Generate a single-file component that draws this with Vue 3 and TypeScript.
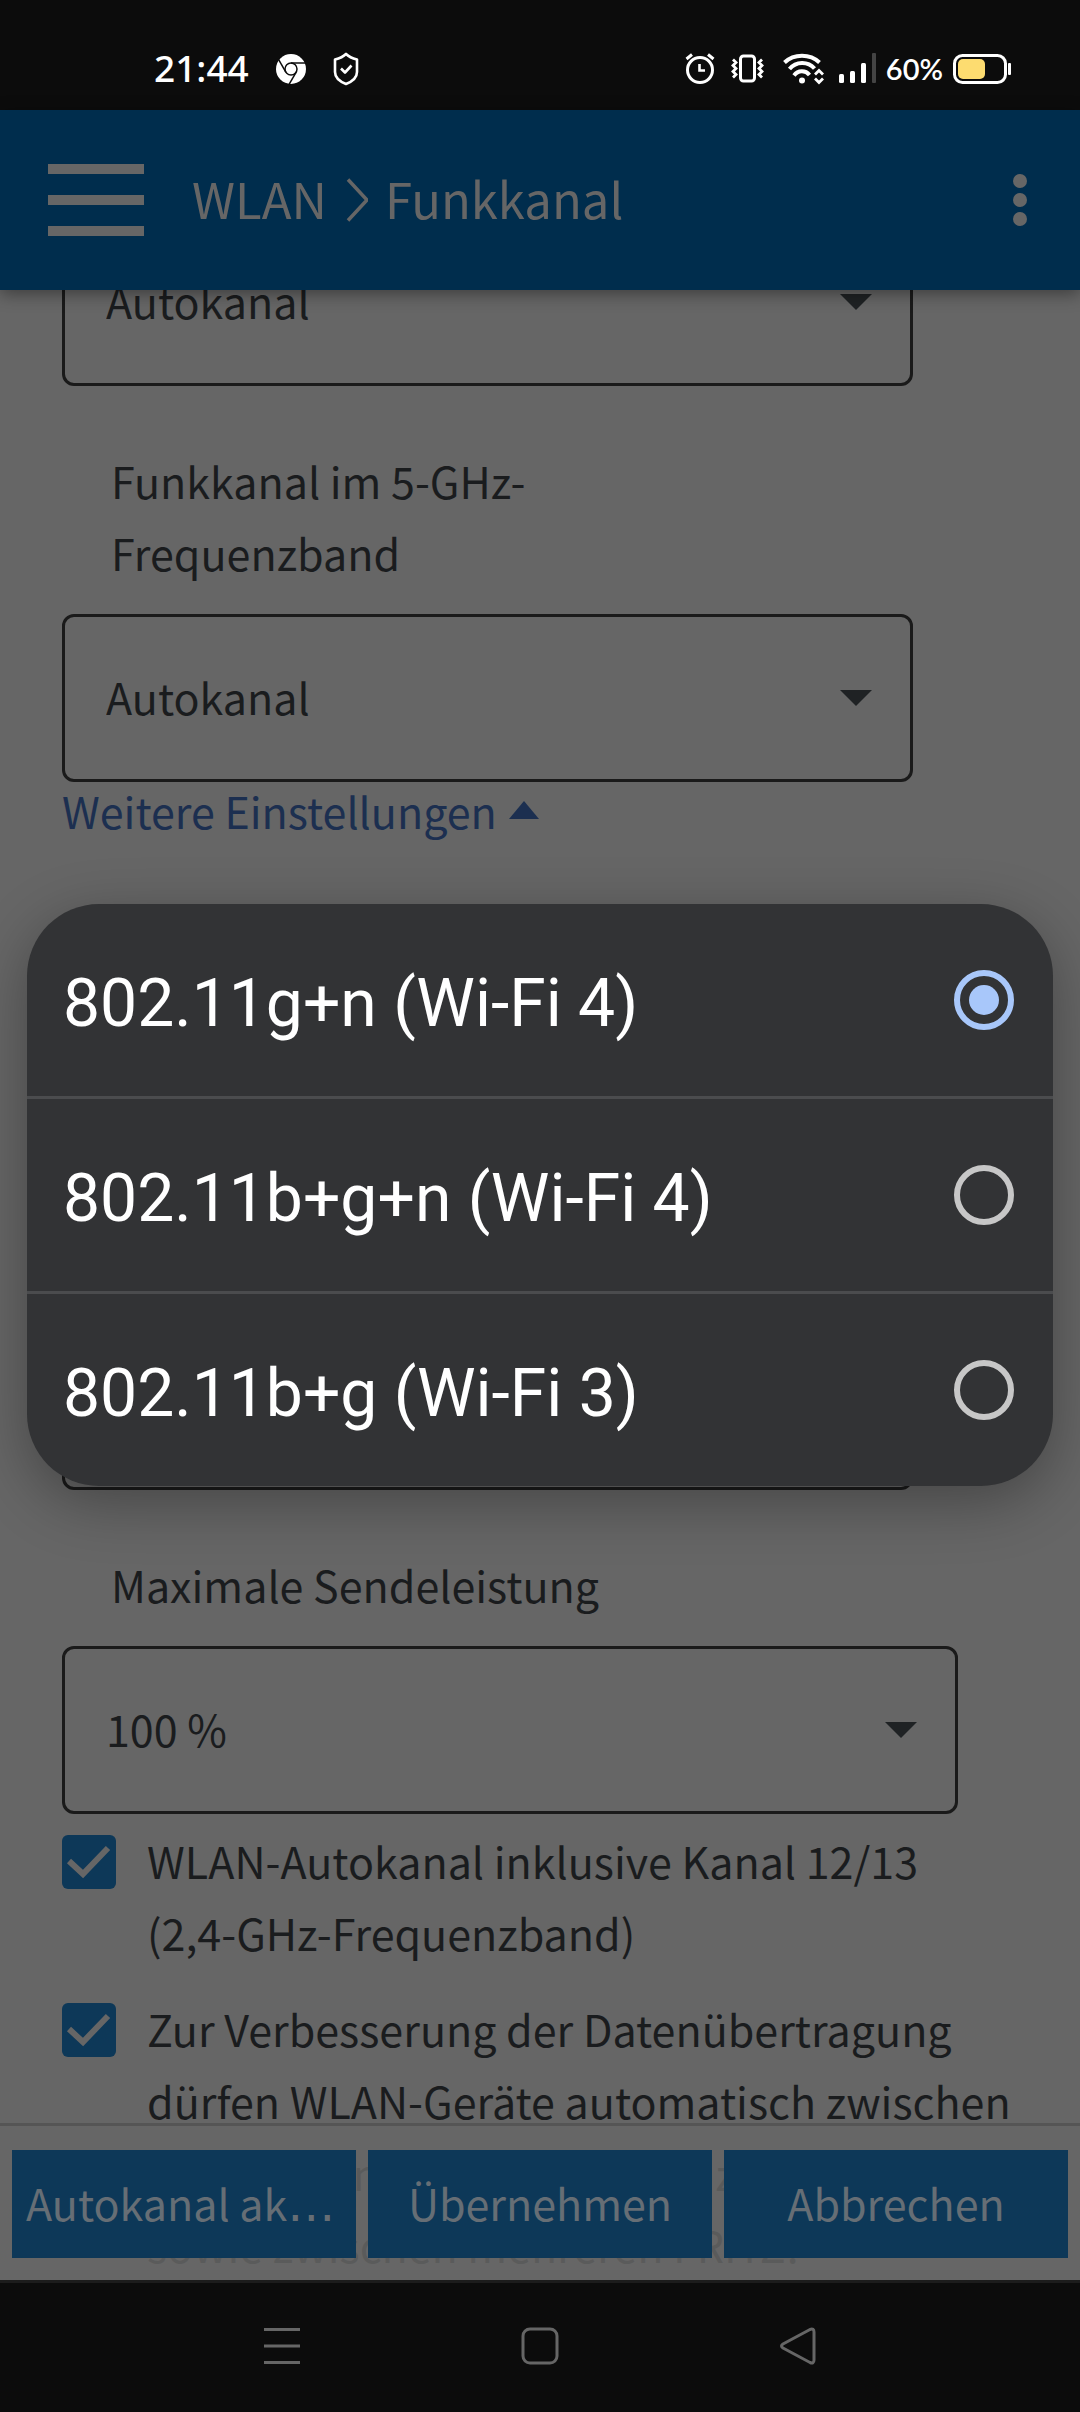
<script setup lang="ts">
import { ref } from 'vue'

const modes: string[] = [
  '802.11g+n (Wi-Fi 4)',
  '802.11b+g+n (Wi-Fi 4)',
  '802.11b+g (Wi-Fi 3)',
]
const mode = ref<string>(modes[0])
const channel24 = ref('Autokanal')
const channel5 = ref('Autokanal')
const power = ref('100 %')
const extendedChannels = ref(true)
const bandSteering = ref(true)
</script>

<template>
  <div class="screen" lang="de">
    <div class="status">
      <div class="status-left">
        <span class="clock">21:44</span>
        <svg width="30" height="32" viewBox="0 0 30 32">
          <circle cx="15" cy="16" r="15" fill="#fff" />
          <g fill="none" stroke="#0c0c0c" stroke-width="1.5">
            <circle cx="15" cy="16" r="6" />
            <path d="M15 10H29" />
            <path d="M15 10H29" transform="rotate(120 15 16)" />
            <path d="M15 10H29" transform="rotate(240 15 16)" />
          </g>
        </svg>
        <svg width="26" height="34" viewBox="0 0 26 34" fill="none" stroke="#fff" stroke-width="2.6" stroke-linejoin="round">
          <path d="M13 2C10 5 6 6.500 2 7.500V20C2 26 8 30 13 32C18 30 24 26 24 20V7.500C20 6.500 16 5 13 2Z" />
          <path d="M8 16.500L12 20.500L18.500 13.500" />
        </svg>
      </div>
      <div class="status-right">
        <svg width="38" height="34" viewBox="0 0 38 34" fill="none" stroke="#fff" stroke-width="3">
          <circle cx="19" cy="18" r="12.500" />
          <path d="M18.500 12V18.500H24" stroke-width="2.600" />
          <path d="M5.500 7L11 2.500M27 2.500L32.500 7" />
        </svg>
        <svg width="38" height="34" viewBox="0 0 38 34" fill="none" stroke="#fff">
          <rect x="11.500" y="4" width="14" height="25" rx="3" stroke-width="3" />
          <path d="M4 7.500L7 10.500L4 13.500L7 16.500L4 19.500L7 22.500L4 25.500M33 7.500L30 10.500L33 13.500L30 16.500L33 19.500L30 22.500L33 25.500" stroke-width="2.800" />
        </svg>
        <svg width="50" height="34" viewBox="0 0 50 34" fill="none" stroke="#fff" stroke-width="4">
          <path d="M7.500 10.500C17 1.500 33 1.500 42.500 10.500" />
          <path d="M12.500 17C19 9 31 9 37.500 16.500" />
          <path d="M17 23.500C21 18 28.500 18 32.500 23" />
          <circle cx="25" cy="28.500" r="3" fill="#fff" stroke="none" />
          <path d="M38 22.500L42 18.500L46 22.500M38 26.500L42 30.500L46 26.500" stroke-width="2.800" />
        </svg>
        <svg width="39" height="34" viewBox="0 0 39 34" fill="#fff">
          <rect x="2" y="22" width="5" height="9" rx="1.500" />
          <rect x="13" y="19" width="5" height="12" rx="1.500" />
          <rect x="24" y="11" width="5" height="20" rx="1.500" />
          <rect x="35" y="1" width="4" height="30" rx="1" fill="#444" />
        </svg>
        <span class="percent">60%</span>
        <svg width="58" height="34" viewBox="0 0 58 34">
          <rect x="1.500" y="3.500" width="51" height="27" rx="8" fill="none" stroke="#fff" stroke-width="3" />
          <rect x="5" y="7" width="27" height="20" rx="5" fill="#fddc70" />
          <rect x="55" y="11" width="3" height="12" rx="1" fill="#fff" />
        </svg>
      </div>
    </div>

    <div class="app">
      <header class="header">
        <button class="menu" type="button" aria-label="Menü">
          <span></span><span></span><span></span>
        </button>
        <h1 class="crumbs">
          <span>WLAN</span>
          <svg width="24" height="44" viewBox="0 0 24 44" fill="none" stroke="#666" stroke-width="3.500">
            <path d="M4 1.500L23 22L4 42.500" />
          </svg>
          <span>Funkkanal</span>
        </h1>
        <button class="more" type="button" aria-label="Mehr">
          <span></span><span></span><span></span>
        </button>
      </header>

      <main class="content">
        <form class="form" @submit.prevent>
          <div class="select first">
            <select v-model="channel24" aria-label="Autokanal">
              <option>Autokanal</option>
            </select>
            <svg class="caret" width="32" height="16" viewBox="0 0 32 16"><path d="M0 0H32L16 16Z" /></svg>
          </div>

          <label class="label" for="channel5">Funkkanal im 5-GHz-Frequenzband</label>
          <div class="select">
            <select id="channel5" v-model="channel5">
              <option>Autokanal</option>
            </select>
            <svg class="caret" width="32" height="16" viewBox="0 0 32 16"><path d="M0 0H32L16 16Z" /></svg>
          </div>

          <a class="link" href="#">
            Weitere Einstellungen
            <svg width="30" height="18" viewBox="0 0 30 18"><path d="M0 18H30L15 0Z" /></svg>
          </a>

          <div class="select mode">
            <select v-model="mode" aria-label="Wi-Fi">
              <option v-for="m in modes" :key="m">{{ m }}</option>
            </select>
            <svg class="caret" width="32" height="16" viewBox="0 0 32 16"><path d="M0 0H32L16 16Z" /></svg>
          </div>

          <label class="label" for="power">Maximale Sendeleistung</label>
          <div class="select wide">
            <select id="power" v-model="power">
              <option>100 %</option>
            </select>
            <svg class="caret" width="32" height="16" viewBox="0 0 32 16"><path d="M0 0H32L16 16Z" /></svg>
          </div>

          <label class="check">
            <span class="box">
              <input v-model="extendedChannels" type="checkbox" />
              <svg v-if="extendedChannels" viewBox="0 0 54 54"><path d="M7 26L21 39L46 13" /></svg>
            </span>
            <span>WLAN-Autokanal inklusive Kanal 12/13 <span class="keep">(2,4-GHz-Frequenzband)</span></span>
          </label>
          <label class="check">
            <span class="box">
              <input v-model="bandSteering" type="checkbox" />
              <svg v-if="bandSteering" viewBox="0 0 54 54"><path d="M7 26L21 39L46 13" /></svg>
            </span>
            <span>Zur Verbesserung der Datenübertragung dürfen WLAN-Geräte automatisch zwischen 2,4-GHz- und 5-GHz-Frequenzband<br />sowie zwischen mehreren FRITZ!</span>
          </label>
        </form>

        <footer class="actions">
          <button type="button">Autokanal ak<span class="dots">…</span></button>
          <button type="button">Übernehmen</button>
          <button type="button">Abbrechen</button>
        </footer>
      </main>

      <div class="overlay">
        <div class="popup" role="dialog" aria-modal="true">
          <label v-for="m in modes" :key="m" class="option">
            <span>{{ m }}</span>
            <input v-model="mode" type="radio" name="mode" :value="m" />
          </label>
        </div>
      </div>
    </div>

    <nav class="nav">
      <button type="button" aria-label="Letzte Apps">
        <svg width="38" height="38" viewBox="0 0 38 38"><path d="M1 2.500H37M1 19H37M1 35.500H37" /></svg>
      </button>
      <button type="button" aria-label="Start">
        <svg width="38" height="38" viewBox="0 0 38 38"><rect x="2" y="2" width="34" height="34" rx="7" /></svg>
      </button>
      <button type="button" aria-label="Zurück">
        <svg width="38" height="38" viewBox="0 0 38 38">
          <path d="M31 2.500L4 17Q1 19 4 21L31 35.500Q35 37 35 33V5Q35 1 31 2.500Z" />
        </svg>
      </button>
    </nav>
  </div>
</template>

<style>
body {
  margin: 0;
  background: #0c0c0c;
}
</style>

<style scoped>
* {
  box-sizing: border-box;
}

.screen {
  display: flex;
  flex-direction: column;
  height: 100vh;
  background: #0c0c0c;
  color: #1a1c1e;
  font-family: "Noto Sans CJK SC", "Noto Sans", sans-serif;
  font-size: 43px;
  line-height: 72px;
}

svg {
  display: block;
  flex: none;
}

button {
  margin: 0;
  padding: 0;
  border: 0;
  background: none;
  font: inherit;
}

/* Status bar */
.status {
  display: flex;
  flex: none;
  align-items: center;
  justify-content: space-between;
  height: 110px;
  padding: 28px 69px 0 154px;
  color: #fff;
  line-height: 40px;
}

.status-left {
  display: flex;
  align-items: center;
  gap: 27px;
}

.clock {
  padding-bottom: 2px;
  font-family: "Noto Sans", sans-serif;
  font-size: 37px;
  font-weight: 500;
}

.status-right {
  display: flex;
  align-items: center;
  gap: 10px;
}

.percent {
  font-family: Lato, sans-serif;
  font-size: 29px;
  font-weight: 600;
}

/* App area */
.app {
  position: relative;
  display: flex;
  flex: 1;
  flex-direction: column;
  min-height: 0;
  background: #666;
}

.header {
  position: relative;
  z-index: 1;
  display: flex;
  flex: none;
  align-items: center;
  height: 180px;
  padding: 0 53px 0 48px;
  background: #002d4d;
  box-shadow: 0 4px 16px rgba(0, 0, 0, 0.4);
}

.menu {
  display: flex;
  flex-direction: column;
  gap: 21px;
  width: 96px;
}

.menu span {
  height: 10px;
  background: #666;
}

.crumbs {
  display: flex;
  flex: 1;
  align-items: center;
  gap: 17px;
  margin: 0 0 0 48px;
  color: #666;
  font-size: 49px;
  font-weight: 400;
}

.crumbs span {
  padding-bottom: 4px;
}

.more {
  display: flex;
  flex-direction: column;
  gap: 5px;
}

.more span {
  width: 14px;
  height: 14px;
  border-radius: 50%;
  background: #666;
}

.content {
  position: relative;
  flex: 1;
  min-height: 0;
  overflow: hidden;
}

.form {
  display: flex;
  flex-direction: column;
  align-items: flex-start;
  padding: 0 62px;
}

.select {
  position: relative;
  width: calc(100% - 105px);
}

.select.wide {
  width: calc(100% - 60px);
}

.select.first {
  margin-top: -72px;
}

.select.mode {
  margin-top: 484px;
}

.select select {
  display: block;
  width: 100%;
  height: 168px;
  padding: 0 90px 4px 41px;
  border: 3px solid #1a1a1a;
  border-radius: 12px;
  appearance: none;
  background: #666;
  color: inherit;
  font: inherit;
}

.caret {
  position: absolute;
  top: 76px;
  right: 41px;
  fill: #1f2224;
  pointer-events: none;
}

.label {
  max-width: 600px;
  margin: 58px 0 26px 49px;
}

.link {
  display: flex;
  align-items: center;
  gap: 12px;
  height: 56px;
  color: #1c2f50;
  text-decoration: none;
}

.link svg {
  fill: #1c2f50;
}

.check {
  display: grid;
  grid-template-columns: 54px 1fr;
  gap: 31px;
  margin-top: 10px;
  margin-bottom: 14px;
}

.keep {
  white-space: nowrap;
}

.box {
  position: relative;
  height: 54px;
  margin-top: 11px;
}

.box input {
  display: block;
  width: 54px;
  height: 54px;
  margin: 0;
  border-radius: 6px;
  appearance: none;
  background: #0d3858;
}

.box svg {
  position: absolute;
  inset: 0;
  fill: none;
  stroke: #666;
  stroke-width: 6;
}

.actions {
  position: absolute;
  right: 0;
  bottom: 0;
  left: 0;
  display: grid;
  grid-template-columns: repeat(3, 1fr);
  gap: 12px;
  padding: 24px 12px 22px;
  border-top: 3px solid #555;
  background: rgba(102, 102, 102, 0.85);
}

.actions button {
  height: 108px;
  padding-bottom: 4px;
  overflow: hidden;
  background: #0d3858;
  color: #666e75;
  white-space: nowrap;
}

.actions button:first-child {
  padding-left: 14px;
  text-align: left;
}

.dots {
  font-family: "DejaVu Sans", sans-serif;
  font-size: 48px;
  line-height: 0;
}

/* Option list */
.overlay {
  position: absolute;
  inset: 0;
  z-index: 2;
  display: grid;
  align-items: center;
  padding: 0 27px;
}

.popup {
  overflow: hidden;
  border-radius: 72px;
  background: #323335;
  box-shadow: 0 16px 60px rgba(0, 0, 0, 0.32);
}

.option {
  display: flex;
  align-items: center;
  justify-content: space-between;
  height: 192px;
  padding: 0 39px 0 36px;
  color: #fff;
  font-family: Roboto, sans-serif;
  font-size: 66px;
}

.option span {
  padding-top: 8px;
}

.option + .option {
  height: 195px;
  border-top: 3px solid #4b4c4e;
}

.option input {
  display: grid;
  place-content: center;
  width: 60px;
  height: 60px;
  margin: 0;
  border: 6px solid #c7c7c7;
  border-radius: 50%;
  appearance: none;
}

.option input:checked {
  border-color: #a8c7fa;
}

.option input:checked::before {
  width: 30px;
  height: 30px;
  border-radius: 50%;
  background: #a8c7fa;
  content: "";
}

/* System navigation */
.nav {
  display: flex;
  flex: none;
  align-items: center;
  justify-content: center;
  gap: 220px;
  height: 132px;
  padding-bottom: 4px;
  border-top: 3px solid #1c1c1c;
}

.nav svg {
  fill: none;
  stroke: #666;
  stroke-width: 3;
}
</style>
